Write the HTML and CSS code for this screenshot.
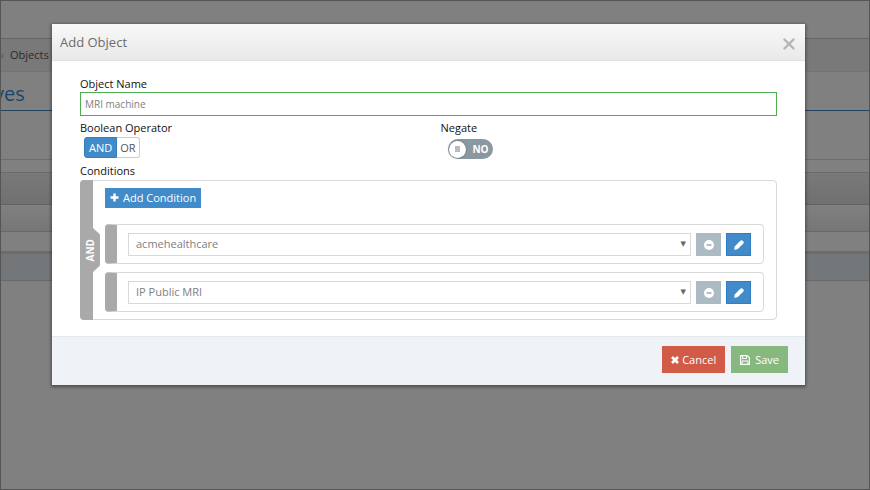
FILE: index.html
```html
<!DOCTYPE html>
<html lang="en">
<head>
    <meta charset="UTF-8">
    <meta name="viewport" content="width=device-width, initial-scale=1.0">
    <title>Add Object</title>
    <link rel="stylesheet" href="styles.css">
</head>
<body>
    <!-- Page behind the dialog -->
    <div class="page">
        <div class="topbar"></div>
        <nav class="breadcrumb"><span class="crumb-arrow">›</span><a href="#">Objects a</a></nav>
        <h1 class="page-title">ves</h1>
        <div class="tools"></div>
        <div class="strip"></div>
        <div class="panel-head"></div>
        <div class="panel-filter"></div>
        <div class="panel-row"></div>
        <div class="panel-active"></div>
    </div>

    <!-- Dialog -->
    <div class="overlay">
        <form class="modal" role="dialog" aria-labelledby="modalTitle">
            <div class="modal-header">
                <h2 id="modalTitle">Add Object</h2>
                <button type="button" class="close" aria-label="Close">
                    <svg width="12" height="12" viewBox="0 0 12 12"><path d="M1.5 1.5L10.5 10.5M10.5 1.5L1.5 10.5" stroke="#b5b5b5" stroke-width="2.4" stroke-linecap="round"/></svg>
                </button>
            </div>

            <div class="modal-body">
                <label class="field-label" for="objectName">Object Name</label>
                <input type="text" id="objectName" class="name-input" value="MRI machine">

                <div class="options">
                    <div>
                        <span class="field-label" id="operatorLabel">Boolean Operator</span>
                        <div class="btn-group" role="group" aria-labelledby="operatorLabel">
                            <button type="button" class="active">AND</button>
                            <button type="button">OR</button>
                        </div>
                    </div>
                    <div>
                        <label class="field-label" for="negate">Negate</label>
                        <label class="switch">
                            <input type="checkbox" id="negate">
                            <span class="knob"></span>
                            <span class="switch-text">NO</span>
                        </label>
                    </div>
                </div>

                <span class="field-label">Conditions</span>
                <div class="conditions">
                    <div class="rail"><div class="rail-tab"><span>AND</span></div></div>
                    <div class="conditions-list">
                        <button type="button" class="btn-add">
                            <svg width="9" height="9" viewBox="0 0 9 9"><path d="M4.5 0.5V8.5M0.5 4.5H8.5" stroke="#fff" stroke-width="2.4"/></svg>
                            Add Condition
                        </button>

                        <div class="condition">
                            <div class="condition-body">
                                <select aria-label="Condition 1"><option>acmehealthcare</option></select>
                                <button type="button" class="btn-icon btn-remove" aria-label="Remove">
                                    <svg width="10" height="10" viewBox="0 0 10 10"><circle cx="5" cy="5" r="5" fill="#fff"/><path d="M2.5 5H7.5" stroke="#9dadb6" stroke-width="1.5"/></svg>
                                </button>
                                <button type="button" class="btn-icon btn-edit" aria-label="Edit">
                                    <svg width="10" height="10" viewBox="0 0 10 10"><path d="M0.2 9.8L0.7 6.4L6 1.1L8.9 4L3.6 9.3Z" fill="#fff"/><path d="M6.4 0.7Q7.5 -0.2 8.4 0.6L9.4 1.6Q10.2 2.5 9.3 3.6L8.6 4.2L5.8 1.3Z" fill="#fff"/></svg>
                                </button>
                            </div>
                        </div>

                        <div class="condition">
                            <div class="condition-body">
                                <select aria-label="Condition 2"><option>IP Public MRI</option></select>
                                <button type="button" class="btn-icon btn-remove" aria-label="Remove">
                                    <svg width="10" height="10" viewBox="0 0 10 10"><circle cx="5" cy="5" r="5" fill="#fff"/><path d="M2.5 5H7.5" stroke="#9dadb6" stroke-width="1.5"/></svg>
                                </button>
                                <button type="button" class="btn-icon btn-edit" aria-label="Edit">
                                    <svg width="10" height="10" viewBox="0 0 10 10"><path d="M0.2 9.8L0.7 6.4L6 1.1L8.9 4L3.6 9.3Z" fill="#fff"/><path d="M6.4 0.7Q7.5 -0.2 8.4 0.6L9.4 1.6Q10.2 2.5 9.3 3.6L8.6 4.2L5.8 1.3Z" fill="#fff"/></svg>
                                </button>
                            </div>
                        </div>
                    </div>
                </div>
            </div>

            <div class="modal-footer">
                <button type="button" class="btn btn-cancel">
                    <svg width="8" height="8" viewBox="0 0 8 8"><path d="M1 1L7 7M7 1L1 7" stroke="#fff" stroke-width="2.6"/></svg>
                    Cancel
                </button>
                <button type="submit" class="btn btn-save">
                    <svg width="10" height="10" viewBox="0 0 10 10"><path d="M0.6 0.6H7.2L9.4 2.8V9.4H0.6Z" fill="none" stroke="#fff" stroke-width="1.2"/><path d="M2.5 0.5H6.5V3.5H2.5ZM2 6H8V9.5H2Z" fill="none" stroke="#fff"/></svg>
                    Save
                </button>
            </div>
        </form>
    </div>
</body>
</html>
```
FILE: styles.css
```css
* {
    box-sizing: border-box;
}
body {
    margin: 0;
    font-family: 'Open Sans', sans-serif;
    font-size: 11px;
    color: #111;
    background: #808080;
}
button, input, select {
    font-family: inherit;
    font-size: 11px;
    margin: 0;
}
button {
    border: 0;
    padding: 0;
    cursor: pointer;
}
svg {
    display: block;
    flex: none;
}

/* page behind the dialog */
.page {
    min-height: 100vh;
    border: 1px solid #555;
    overflow: hidden;
}
.topbar {
    height: 38px;
    border-bottom: 1px solid #646464;
}
.breadcrumb {
    height: 33px;
    padding-bottom: 1px;
    display: flex;
    align-items: center;
    gap: 6px;
    background: #797979;
    border-bottom: 1px solid #747474;
}
.breadcrumb a {
    color: #2b2b2b;
    text-decoration: none;
    white-space: nowrap;
}
.crumb-arrow {
    width: 3px;
    color: #555;
    direction: rtl;
}
/* the heading runs off the left edge */
.page-title {
    height: 39px;
    margin: 0;
    padding-top: 8px;
    font-size: 20px;
    line-height: 28px;
    font-weight: 400;
    text-indent: -7px;
    color: #1a466c;
    border-bottom: 1px solid #23425d;
}
.tools {
    height: 49px;
    border-bottom: 1px solid #6c6e70;
}
.strip {
    height: 13px;
    border-bottom: 1px solid #6a6a6a;
}
.panel-head {
    height: 32px;
    background: linear-gradient(#797979, #707070);
    border-bottom: 1px solid #626262;
}
.panel-filter {
    height: 27px;
    background: linear-gradient(#808080, #767676);
    border-bottom: 1px solid #686868;
}
.panel-row {
    height: 22px;
    border-bottom: 3px solid #6c6c6c;
}
.panel-active {
    height: 27px;
    background: #74777a;
    border-bottom: 1px solid #696969;
}

/* dialog */
.overlay {
    position: absolute;
    top: 0;
    left: 0;
    right: 0;
    padding: 24px 65px 24px 52px;
}
.modal {
    background: #fff;
    box-shadow: 0 1px 3px 1px rgba(0, 0, 0, 0.4);
}
.modal-header {
    height: 37px;
    padding: 0 10px 0 8px;
    display: flex;
    align-items: center;
    justify-content: space-between;
    background: linear-gradient(#f8f8f8, #e9e9e9);
    border-bottom: 1px solid #e0e0e0;
}
.modal-header h2 {
    margin: 0;
    font-size: 13px;
    font-weight: 400;
    color: #6c6c6c;
}
.close {
    padding-top: 4px;
    background: none;
}
.modal-body {
    padding: 16px 28px;
}
.field-label {
    display: block;
    padding-bottom: 2px;
    line-height: 13px;
}
.name-input {
    display: block;
    width: 100%;
    height: 24px;
    padding: 0 4px;
    font-size: 10px;
    color: #808080;
    background: #fff;
    border: 1px solid #4caf50;
    outline: 0;
}
.options {
    display: grid;
    grid-template-columns: 15fr 14fr;
    margin: 5px 0;
}
.btn-group {
    display: flex;
    margin: 1px 4px 0;
}
.btn-group button {
    height: 21px;
    padding: 0 3px 1px;
    color: #555;
    background: #fff;
    border: 1px solid #ccc;
    border-left: 0;
    border-radius: 0 3px 3px 0;
}
.btn-group .active {
    padding: 0 4px 1px;
    color: #fff;
    background: #428bca;
    border: 1px solid #357ebd;
    border-radius: 3px 0 0 3px;
}
.switch {
    width: 45px;
    height: 20px;
    margin: 3px 7px 0;
    padding: 0 4px 0 1px;
    display: flex;
    align-items: center;
    justify-content: space-between;
    background: #8a98a1;
    border-radius: 10px;
    cursor: pointer;
}
.switch input {
    position: absolute;
    opacity: 0;
}
.knob {
    width: 17px;
    height: 17px;
    display: flex;
    align-items: center;
    justify-content: center;
    background: #fff;
    border-radius: 50%;
    box-shadow: 0 0 2px #56646d;
}
.knob::before {
    content: "";
    width: 5px;
    height: 6px;
    background: #bbb;
}
.switch-text {
    font-size: 10px;
    font-weight: 700;
    color: #fff;
}

/* conditions */
.conditions {
    display: flex;
    margin-top: 1px;
    border: 1px solid #d9d9d9;
    border-radius: 4px;
}
.rail {
    width: 13px;
    margin: -1px 0 -1px -1px;
    display: flex;
    align-items: center;
    background: #a9a9a9;
    border-radius: 4px 0 0 4px;
}
.rail-tab {
    width: 20px;
    height: 44px;
    flex: none;
    display: flex;
    align-items: center;
    justify-content: center;
    background: #a9a9a9;
    clip-path: polygon(0 0, 65% 0, 100% 15%, 100% 85%, 65% 100%, 0 100%);
}
.rail-tab span {
    writing-mode: vertical-rl;
    transform: rotate(180deg);
    font-size: 10px;
    font-weight: 700;
    line-height: 20px;
    color: #fff;
}
.conditions-list {
    flex: 1;
    padding: 7px 12px;
}
.btn-add {
    height: 20px;
    margin-bottom: 16px;
    padding: 0 5px 1px;
    display: flex;
    align-items: center;
    gap: 4px;
    color: #fff;
    background: #428bca;
}
.condition {
    height: 40px;
    border: 1px solid #d9d9d9;
    border-left: 12px solid #a9a9a9;
    border-radius: 4px;
}
.condition + .condition {
    margin-top: 8px;
}
.condition-body {
    position: relative;
    display: flex;
    gap: 5px;
    padding: 8px 12px 8px 11px;
}
.condition select {
    flex: 1;
    height: 23px;
    padding: 0 7px 2px;
    appearance: none;
    color: #808080;
    background: #fff;
    border: 1px solid #d9d9d9;
    border-radius: 0;
}
/* drop-down arrow */
.condition-body::after {
    content: "▼";
    position: absolute;
    top: 14px;
    right: 77px;
    font-family: 'DejaVu Sans', sans-serif;
    font-size: 7px;
    line-height: 10px;
    color: #666;
    pointer-events: none;
}
.btn-icon {
    width: 25px;
    height: 23px;
    display: flex;
    align-items: center;
    justify-content: center;
}
.btn-remove {
    background: #abbac3;
}
.btn-edit {
    background: #428bca;
    border: 1px solid #2f7fc6;
}

.modal-footer {
    display: flex;
    justify-content: flex-end;
    gap: 6px;
    padding: 9px 17px 12px;
    background: #eff3f8;
    border-top: 1px solid #e4e9ee;
}
.btn {
    height: 27px;
    padding: 0 9px;
    display: flex;
    align-items: center;
    gap: 3px;
    color: #fff;
}
.btn-cancel {
    background: #d15b47;
}
.btn-save {
    gap: 5px;
    background: #87b87f;
}
```
